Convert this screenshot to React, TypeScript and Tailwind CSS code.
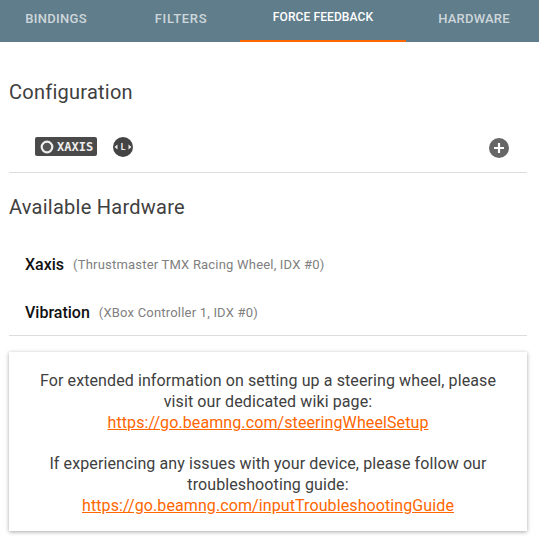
function Tabs() {
  return (
    <div className="flex h-[42px] bg-[#607d8b] text-[13px] font-medium tracking-[0.2px]">
      <div className="flex w-[112px] h-full items-center justify-center pb-[5px] text-white/70 tracking-[0.3px]">BINDINGS</div>
      <div className="flex w-[128px] h-full items-center justify-center pb-[5px] pl-[10px] text-white/70 tracking-[0.7px]">FILTERS</div>
      <div className="flex w-[166px] h-full items-center justify-center pb-[6px] text-white border-b-2 border-[#ff6600] text-[12px] tracking-[0.1px]">FORCE FEEDBACK</div>
      <div className="flex w-[133px] h-full items-center justify-center pb-[5px] pl-[3px] text-white/70">HARDWARE</div>
    </div>
  )
}

function ControlBadge() {
  return (
    <div className="flex items-center h-[19px] w-[62px] rounded-[2px] bg-[#4a4a4a] pl-[5px] gap-[3px]">
      <svg width="14" height="14" viewBox="0 0 14 14">
        <circle cx="7" cy="7" r="5.3" fill="#555" stroke="#eee" strokeWidth="2.2" />
      </svg>
      <span className="text-[12px] text-[#eee] font-['DejaVu_Sans_Mono'] font-bold leading-none">XAXIS</span>
    </div>
  )
}

function StickIcon() {
  return (
    <svg width="20" height="20" viewBox="0 0 20 20">
      <circle cx="10" cy="10" r="10" fill="#444" />
      <path d="M1.5 10 L4.5 7.5 V12.5 Z M18.5 10 L15.5 7.5 V12.5 Z" fill="#eee" />
      <text x="10" y="13" textAnchor="middle" fontSize="8.5" fontWeight="700" fill="#eee" fontFamily="Roboto, sans-serif">L</text>
    </svg>
  )
}

function PlusIcon() {
  return (
    <svg width="20" height="20" viewBox="0 0 20 20">
      <circle cx="10" cy="10" r="10" fill="#666" />
      <path d="M10 5 V15 M5 10 H15" stroke="#fff" strokeWidth="2.2" />
    </svg>
  )
}

function HardwareRow({ name, detail }: { name: string; detail: string }) {
  return (
    <div className="flex items-center h-[48px] pl-[16px]">
      <span className="text-[16px] font-medium text-[#111]">{name}</span>
      <span className="ml-[9px] text-[13px] tracking-[0.2px] text-[#808080]">{detail}</span>
    </div>
  )
}

export default function App() {
  return (
    <div className="w-[539px] h-[537px] bg-white overflow-hidden font-['Roboto',sans-serif]">
      <Tabs />
      <div className="pl-[9px] pr-[12px]">
        <h2 className="pt-[37px] text-[20px] leading-[26px] tracking-[0.25px] text-[#404040]">Configuration</h2>
        <div className="flex items-center h-[48px] mt-[20px] pl-[26px] pr-[18px] pb-[4px] border-b border-[#ddd]">
          <ControlBadge />
          <div className="ml-[16px]"><StickIcon /></div>
          <div className="ml-auto mt-[3px]"><PlusIcon /></div>
        </div>
        <h2 className="pt-[21px] text-[20px] leading-[26px] tracking-[0.25px] text-[#404040]">Available Hardware</h2>
        <div className="mt-[21px] h-[95px] border-b border-[#ddd]">
          <HardwareRow name="Xaxis" detail="(Thrustmaster TMX Racing Wheel, IDX #0)" />
          <HardwareRow name="Vibration" detail="(XBox Controller 1, IDX #0)" />
        </div>
        <div className="mt-[16px] h-[179px] bg-white shadow-[0_1px_4px_rgba(0,0,0,0.35)] pt-[18px] text-center text-[16px] leading-[21px] tracking-[0.1px] text-[#404040]">
          <p className="mx-auto w-[480px]">For extended information on setting up a steering wheel, please visit our dedicated wiki page:</p>
          <a className="block text-[#ff6600] underline">https://go.beamng.com/steeringWheelSetup</a>
          <p className="mt-[20px] mx-auto w-[480px]">If experiencing any issues with your device, please follow our troubleshooting guide:</p>
          <a className="block text-[#ff6600] underline">https://go.beamng.com/inputTroubleshootingGuide</a>
        </div>
      </div>
    </div>
  )
}
